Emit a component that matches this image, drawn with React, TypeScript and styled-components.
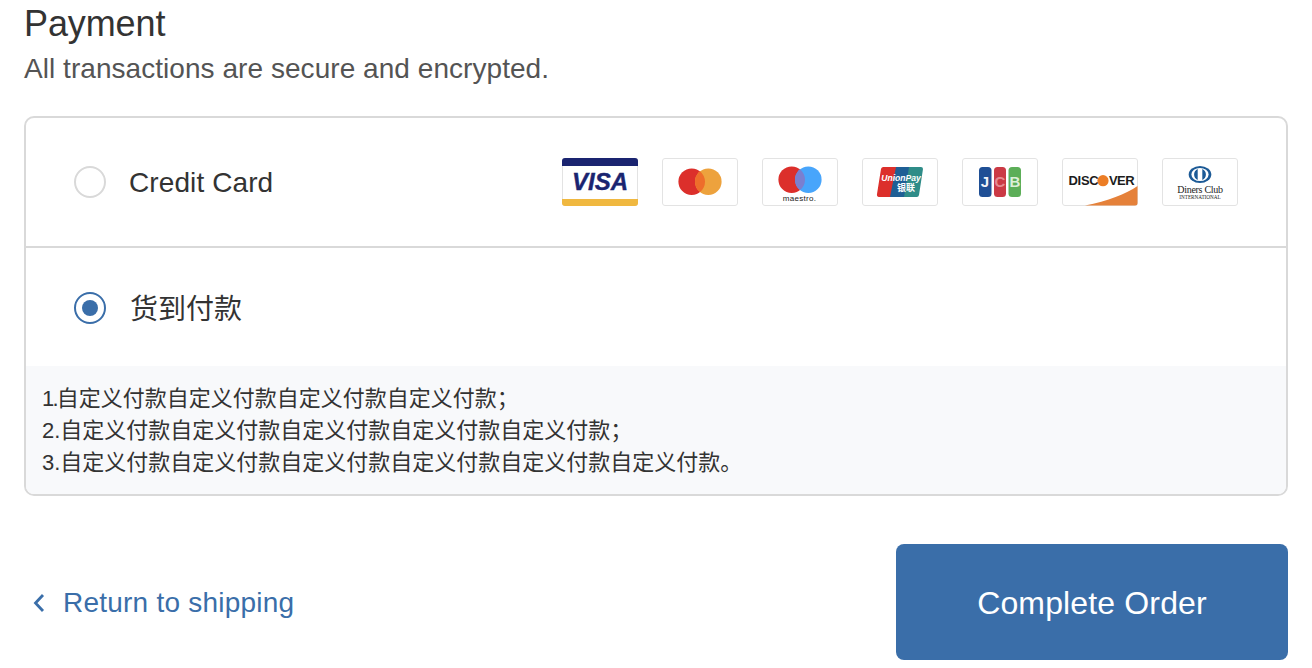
import React from "react";
import styled, { createGlobalStyle } from "styled-components";

const GlobalStyle = createGlobalStyle`
  html, body {
    margin: 0;
    padding: 0;
    background: #fff;
    overflow: hidden;
  }
  body {
    font-family: "Liberation Sans", "Noto Sans CJK SC", sans-serif;
    color: #333;
  }
`;

const Page = styled.main`
  width: 1312px;
  height: 668px;
  box-sizing: border-box;
  padding: 0 24px;
`;

const Title = styled.h2`
  margin: 0;
  font-size: 36px;
  font-weight: 400;
  line-height: 48px;
  letter-spacing: -0.1px;
  color: #333;
`;

const Subtitle = styled.p`
  margin: 1px 0 27px;
  font-size: 28px;
  line-height: 40px;
  letter-spacing: 0.05px;
  color: #545454;
`;

const Methods = styled.section`
  border: 2px solid #d9d9d9;
  border-radius: 10px;
  overflow: hidden;
`;

const Method = styled.label<{ $height: number; $top?: number; $divided?: boolean }>`
  display: flex;
  align-items: center;
  justify-content: space-between;
  height: ${p => p.$height - (p.$top || 0)}px;
  padding: ${p => p.$top || 0}px 48px 0;
  border-bottom: ${p => (p.$divided ? "2px solid #d9d9d9" : "none")};
`;

const MethodName = styled.div`
  display: flex;
  align-items: center;
  gap: 23px;
`;

const MethodText = styled.span<{ $latin?: boolean }>`
  font-size: 28px;
  color: #333;
  padding: ${p => (p.$latin ? "2px 0 0" : "0 0 2px 1px")};
  letter-spacing: ${p => (p.$latin ? "0.1px" : "0")};
`;

const Radio = styled.span<{ $checked?: boolean }>`
  display: flex;
  align-items: center;
  justify-content: center;
  width: 32px;
  height: 32px;
  box-sizing: border-box;
  border-radius: 50%;
  border: 2px solid ${p => (p.$checked ? "#3a6ea9" : "#d9d9d9")};
  &::after {
    content: "";
    display: ${p => (p.$checked ? "block" : "none")};
    width: 16px;
    height: 16px;
    border-radius: 50%;
    background: #3a6ea9;
  }
`;

const CardList = styled.div`
  display: flex;
  gap: 24px;
`;

const CardBadge = styled.svg`
  display: block;
  width: 76px;
  height: 48px;
`;

const Note = styled.div`
  padding: 17px 16px 15px;
  background: #f8f9fb;
  font-size: 22px;
  line-height: 32px;
  color: #333;
`;

const NarrowNumber = styled.span`
  letter-spacing: -1.8px;
`;

const Footer = styled.footer`
  display: flex;
  align-items: center;
  justify-content: space-between;
  margin-top: 48px;
`;

const BackLink = styled.a`
  display: flex;
  align-items: center;
  gap: 17px;
  margin-left: 8px;
  padding-top: 2px;
  font-size: 28px;
  letter-spacing: 0.23px;
  color: #3a6ea9;
`;

const SubmitButton = styled.button`
  width: 392px;
  height: 116px;
  padding: 2px 0 0;
  border: 0;
  border-radius: 8px;
  background: #3a6ea9;
  color: #fff;
  font-family: inherit;
  font-size: 32px;
  letter-spacing: 0.15px;
`;

const Frame = ({ stroke = "#e3e3e3" }: { stroke?: string }) => (
  <rect x="0.5" y="0.5" width="75" height="47" rx="2.5" fill="#fff" stroke={stroke} />
);

const Visa = () => (
  <CardBadge viewBox="0 0 76 48">
    <Frame />
    <path d="M0 8V3a3 3 0 0 1 3-3h70a3 3 0 0 1 3 3v5z" fill="#1a2470" />
    <path d="M0 41v4a3 3 0 0 0 3 3h70a3 3 0 0 0 3-3v-4z" fill="#f0b840" />
    <text x="38" y="32" textAnchor="middle" fontFamily="Liberation Sans" fontSize="24" fontWeight="700" fontStyle="italic" fill="#1a2470" stroke="#1a2470" strokeWidth="0.4">
      VISA
    </text>
  </CardBadge>
);

const Mastercard = () => (
  <CardBadge viewBox="0 0 76 48">
    <Frame />
    <circle cx="29.7" cy="23.7" r="13.3" fill="#dc2f2b" />
    <circle cx="46.3" cy="23.7" r="13.3" fill="#eda23d" />
    <path d="M38 13.3a13.3 13.3 0 0 1 0 20.8a13.3 13.3 0 0 1 0-20.8z" fill="#ee6d2b" />
  </CardBadge>
);

const Maestro = () => (
  <CardBadge viewBox="0 0 76 48">
    <Frame />
    <circle cx="29.7" cy="21.7" r="13.3" fill="#dc2f2b" />
    <circle cx="46.3" cy="21.7" r="13.3" fill="#48a5fb" />
    <path d="M38 11.3a13.3 13.3 0 0 1 0 20.8a13.3 13.3 0 0 1 0-20.8z" fill="#7a7fd0" />
    <text x="37.5" y="42.5" textAnchor="middle" fontFamily="Liberation Sans" fontSize="8" letterSpacing="0.3" fill="#222">
      maestro.
    </text>
  </CardBadge>
);

const UnionPay = () => (
  <CardBadge viewBox="0 0 76 48">
    <Frame />
    <path d="M21 9h17l-5 30H17a2.5 2.5 0 0 1-2-3l4-25a2.5 2.5 0 0 1 2-2z" fill="#dc2f2b" />
    <path d="M34 9h17l-5 30H28z" fill="#1f5f95" />
    <path d="M47 9h12a2 2 0 0 1 2 2l-4 26a2.5 2.5 0 0 1-3 2H42z" fill="#2f8c88" />
    <text x="39" y="23" textAnchor="middle" fontFamily="Liberation Sans" fontSize="8.6" fontWeight="700" fontStyle="italic" fill="#fff">
      UnionPay
    </text>
    <text x="44" y="33" textAnchor="middle" fontFamily="Noto Sans CJK SC" fontSize="9" fontWeight="700" fill="#fff">
      银联
    </text>
  </CardBadge>
);

const Jcb = () => (
  <CardBadge viewBox="0 0 76 48">
    <Frame />
    <rect x="17" y="9" width="12.5" height="30" rx="3.5" fill="#1f4f95" />
    <rect x="32" y="9" width="12" height="30" rx="3.5" fill="#cb3a45" />
    <rect x="46.5" y="9" width="12.5" height="30" rx="3.5" fill="#5cae58" />
    <text y="29" textAnchor="middle" fontFamily="Liberation Sans" fontSize="15" fontWeight="700">
      <tspan x="23" fill="#f2f4f8">J</tspan>
      <tspan x="38" fill="#e58a90">C</tspan>
      <tspan x="53" fill="#dcefd8">B</tspan>
    </text>
  </CardBadge>
);

const Discover = () => (
  <CardBadge viewBox="0 0 76 48">
    <Frame />
    <path d="M23 47.5C46 43 64 36 75.5 28v17a2.5 2.5 0 0 1-2.5 2.5z" fill="#e5813a" />
    <text x="6.5" y="27" fontFamily="Liberation Sans" fontSize="13" fontWeight="700" letterSpacing="-0.3" fill="#1c1c1c">
      DISC
    </text>
    <circle cx="41" cy="22.7" r="5.6" fill="#ec7d25" />
    <text x="47" y="27" fontFamily="Liberation Sans" fontSize="13" fontWeight="700" letterSpacing="-0.6" fill="#1c1c1c">
      VER
    </text>
  </CardBadge>
);

const Diners = () => (
  <CardBadge viewBox="0 0 76 48">
    <Frame />
    <ellipse cx="38" cy="16.5" rx="11.3" ry="8.6" fill="#1c5a96" />
    <ellipse cx="38" cy="16.5" rx="8.6" ry="6.6" fill="#fff" />
    <path d="M35.7 11a6 6 0 0 0 0 11zM40.3 11a6 6 0 0 1 0 11z" fill="#1c5a96" />
    <text x="38" y="35" textAnchor="middle" fontFamily="Liberation Serif" fontSize="10" letterSpacing="-0.3" fill="#222">
      Diners Club
    </text>
    <text x="38" y="40.5" textAnchor="middle" fontFamily="Liberation Serif" fontSize="5.2" fill="#222">
      INTERNATIONAL
    </text>
  </CardBadge>
);

const App = () => (
  <Page>
    <GlobalStyle />
    <Title>Payment</Title>
    <Subtitle>All transactions are secure and encrypted.</Subtitle>
    <Methods>
      <Method $height={128} $divided>
        <MethodName>
          <Radio />
          <MethodText $latin>Credit Card</MethodText>
        </MethodName>
        <CardList>
          <Visa />
          <Mastercard />
          <Maestro />
          <UnionPay />
          <Jcb />
          <Discover />
          <Diners />
        </CardList>
      </Method>
      <Method $height={118} $top={2}>
        <MethodName>
          <Radio $checked />
          <MethodText>货到付款</MethodText>
        </MethodName>
      </Method>
      <Note>
        <NarrowNumber>1.</NarrowNumber>自定义付款自定义付款自定义付款自定义付款；
        <br />
        2.自定义付款自定义付款自定义付款自定义付款自定义付款；
        <br />
        3.自定义付款自定义付款自定义付款自定义付款自定义付款自定义付款。
      </Note>
    </Methods>
    <Footer>
      <BackLink>
        <svg width="14" height="20" viewBox="0 0 14 20" fill="none" stroke="#3a6ea9" strokeWidth="2.8">
          <path d="M11 2 3.5 10l7.5 8" />
        </svg>
        Return to shipping
      </BackLink>
      <SubmitButton>Complete Order</SubmitButton>
    </Footer>
  </Page>
);

export default App;
